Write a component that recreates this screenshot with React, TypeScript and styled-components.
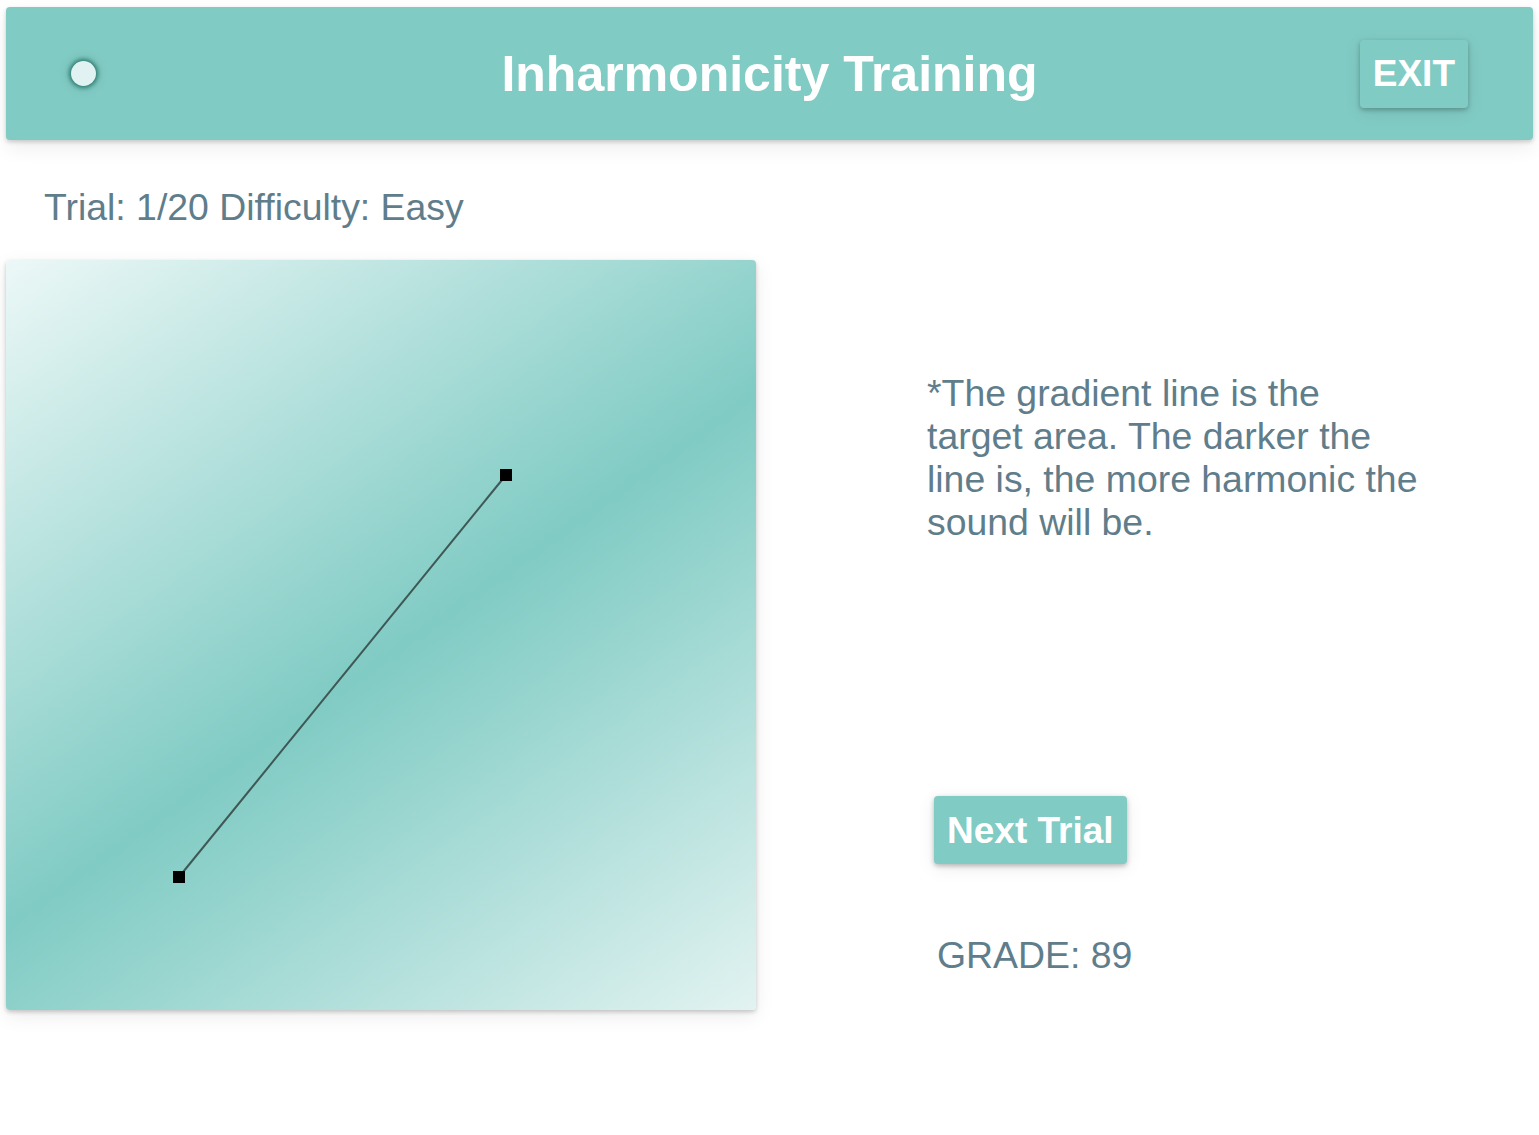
import React from "react";
import styled, { createGlobalStyle } from "styled-components";

const GlobalStyle = createGlobalStyle`
  html, body {
    margin: 0;
    padding: 0;
    background: #ffffff;
  }
  body {
    font-family: "Liberation Sans", Arial, sans-serif;
  }
`;

const Page = styled.div`
  padding: 7px 6px 40px;
  font-family: "Liberation Sans", Arial, sans-serif;
  color: #607d8b;
`;

const Header = styled.header`
  height: 133px;
  box-sizing: border-box;
  display: grid;
  grid-template-columns: 1fr auto 1fr;
  align-items: center;
  padding: 0 65px;
  background: #80cbc4;
  border-radius: 4px;
  box-shadow: 0 2px 4px rgba(0, 0, 0, 0.18), 0 8px 20px rgba(0, 0, 0, 0.07);
`;

const Knob = styled.div`
  justify-self: start;
  width: 25px;
  height: 25px;
  border-radius: 50%;
  background: #e0f2f1;
  box-shadow: 0 0 4px 2px rgba(0, 77, 64, 0.6), 0 0 14px rgba(0, 77, 64, 0.18);
`;

const Title = styled.h1`
  margin: 0;
  font-size: 50px;
  font-weight: 700;
  color: #ffffff;
  line-height: 58px;
  white-space: nowrap;
`;

const TealButton = styled.button<{ $shift?: number }>`
  box-sizing: border-box;
  height: 68px;
  padding: 0 13px;
  margin-left: ${(p) => p.$shift ?? 0}px;
  border: none;
  border-radius: 4px;
  background: #80cbc4;
  color: #ffffff;
  font-family: "Liberation Sans", Arial, sans-serif;
  font-size: 37px;
  font-weight: 700;
  line-height: 43px;
  cursor: pointer;
  box-shadow: 0 2px 5px rgba(0, 0, 0, 0.26), 0 4px 18px rgba(0, 0, 0, 0.08);
`;

const ExitButton = styled(TealButton)`
  justify-self: end;
`;

const Status = styled.div`
  margin: 46px 0 0 38px;
  font-size: 37.4px;
  line-height: 43px;
`;

const Main = styled.main`
  display: flex;
  align-items: flex-start;
  margin-top: 31px;
`;

const Board = styled.div`
  flex: none;
  width: 750px;
  height: 750px;
  border-radius: 4px;
  overflow: hidden;
  background: linear-gradient(144.6deg, #ecf8f7 0%, #80cbc4 52%, #e2f3f1 100%);
  box-shadow: 0 2px 4px rgba(0, 0, 0, 0.2), 0 6px 20px rgba(0, 0, 0, 0.08);
`;

const Side = styled.section`
  display: flex;
  flex-direction: column;
  align-items: flex-start;
  margin-left: 169px;
`;

const Note = styled.p`
  margin: 112px 0 0 2px;
  width: 494px;
  font-size: 37.4px;
  line-height: 43px;
`;

const NextButton = styled(TealButton)`
  margin-top: 252px;
`;

const Grade = styled.div`
  margin: 70px 0 0 12px;
  font-size: 37.4px;
  line-height: 43px;
`;

const start = { x: 173, y: 617 };
const end = { x: 500, y: 215 };

export default function App() {
  return (
    <>
      <GlobalStyle />
      <Page>
        <Header>
          <Knob />
          <Title>Inharmonicity Training</Title>
          <ExitButton>EXIT</ExitButton>
        </Header>
        <Status>Trial: 1/20 Difficulty: Easy</Status>
        <Main>
          <Board>
            <svg width="750" height="750" viewBox="0 0 750 750">
              <line
                x1={start.x}
                y1={start.y}
                x2={end.x}
                y2={end.y}
                stroke="#3f5855"
                strokeWidth="2"
              />
              <rect x={start.x - 6} y={start.y - 6} width="12" height="12" fill="#000" />
              <rect x={end.x - 6} y={end.y - 6} width="12" height="12" fill="#000" />
            </svg>
          </Board>
          <Side>
            <Note>
              *The gradient line is the target area. The darker the line is, the more harmonic the
              sound will be.
            </Note>
            <NextButton $shift={9}>Next Trial</NextButton>
            <Grade>GRADE: 89</Grade>
          </Side>
        </Main>
      </Page>
    </>
  );
}
